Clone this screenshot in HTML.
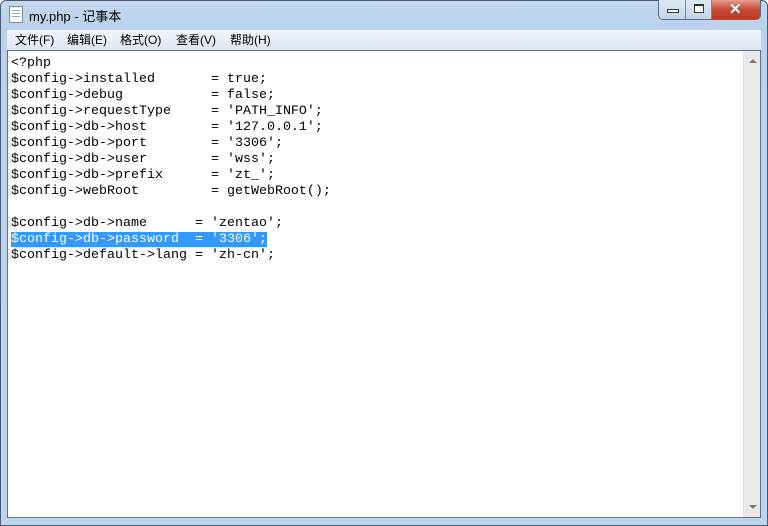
<!DOCTYPE html>
<html><head><meta charset="utf-8"><style>
*{margin:0;padding:0;box-sizing:border-box}
body{width:768px;height:526px;overflow:hidden;background:#fff;position:relative;font-family:"Liberation Sans","Noto Sans CJK SC",sans-serif}
.frame{position:absolute;left:0;top:0;width:768px;height:526px;background:linear-gradient(180deg,#c4d8ee 0,#b9d1ea 30px,#bcd4ec 100%);border:1px solid #4a5a6e;border-radius:6px 6px 0 0}
.title{position:absolute;left:29px;top:6px;font-size:13px;color:#000}
.icon{position:absolute;left:9px;top:6px;width:14px;height:17px;background:#fff;border:1px solid #7a8a9a}
.icon:before{content:"";position:absolute;left:2px;top:3px;width:8px;height:9px;background:repeating-linear-gradient(180deg,#9ab 0 1px,transparent 1px 3px)}
.btns{position:absolute;left:658px;top:0;height:20px;width:103px;border:1px solid #5a6a80;border-top:none;border-radius:0 0 5px 5px;overflow:hidden;display:flex}
.b{height:19px;background:linear-gradient(#dfe9f5,#c3d4e8);border-right:1px solid #7a8aa0;position:relative}
.b1{width:28px}.b2{width:26px}.b3{width:49px;background:linear-gradient(#e8a090,#c74a33 50%,#b83a22);border:none}
.menu{position:absolute;left:7px;top:30px;width:754px;height:20px;background:linear-gradient(#f3f6fb,#dde5f1);font-size:12px;color:#000}
.menu span{position:absolute;top:1px}
.text{position:absolute;left:7px;top:50px;width:754px;height:468px;background:#fff;border:1px solid #5f6f84}
.sb{position:absolute;right:0;top:0;width:17px;height:466px;background:#eaeaea;border-left:1px solid #ddd}
pre{position:absolute;left:3px;top:5px;font-family:"Liberation Mono",monospace;font-size:13.33px;line-height:16px;color:#000}
.sel{background:#3399ff;color:#fff}
</style></head><body>
<div class="frame"></div>
<div class="icon"></div>
<div class="title">my.php - 记事本</div>
<div class="btns"><div class="b b1"><div style="position:absolute;left:8px;top:9px;width:12px;height:4px;border:1px solid #333;background:#fff"></div></div><div class="b b2"><div style="position:absolute;left:8px;top:4px;width:10px;height:9px;border:1px solid #333;border-top-width:2px;background:#fff"></div></div><div class="b b3"><div style="position:absolute;left:17px;top:0px;color:#fff;font-weight:bold;font-size:15px;text-shadow:0 0 1px #333">✕</div></div></div>
<div class="menu"><span style="left:8px">文件(F)</span><span style="left:60px">编辑(E)</span><span style="left:113px">格式(O)</span><span style="left:169px">查看(V)</span><span style="left:223px">帮助(H)</span></div>
<div class="text"><div class="sb"><div style="position:absolute;left:5px;top:8px;border:4px solid transparent;border-bottom:4px solid #777;border-top:none"></div><div style="position:absolute;left:5px;bottom:8px;border:4px solid transparent;border-top:4px solid #777;border-bottom:none"></div></div>
<pre>&lt;?php
$config-&gt;installed       = true;
$config-&gt;debug           = false;
$config-&gt;requestType     = 'PATH_INFO';
$config-&gt;db-&gt;host        = '127.0.0.1';
$config-&gt;db-&gt;port        = '3306';
$config-&gt;db-&gt;user        = 'wss';
$config-&gt;db-&gt;prefix      = 'zt_';
$config-&gt;webRoot         = getWebRoot();

$config-&gt;db-&gt;name      = 'zentao';
<span class="sel">$config-&gt;db-&gt;password  = '3306';</span>
$config-&gt;default-&gt;lang = 'zh-cn';</pre></div>
</body></html>
